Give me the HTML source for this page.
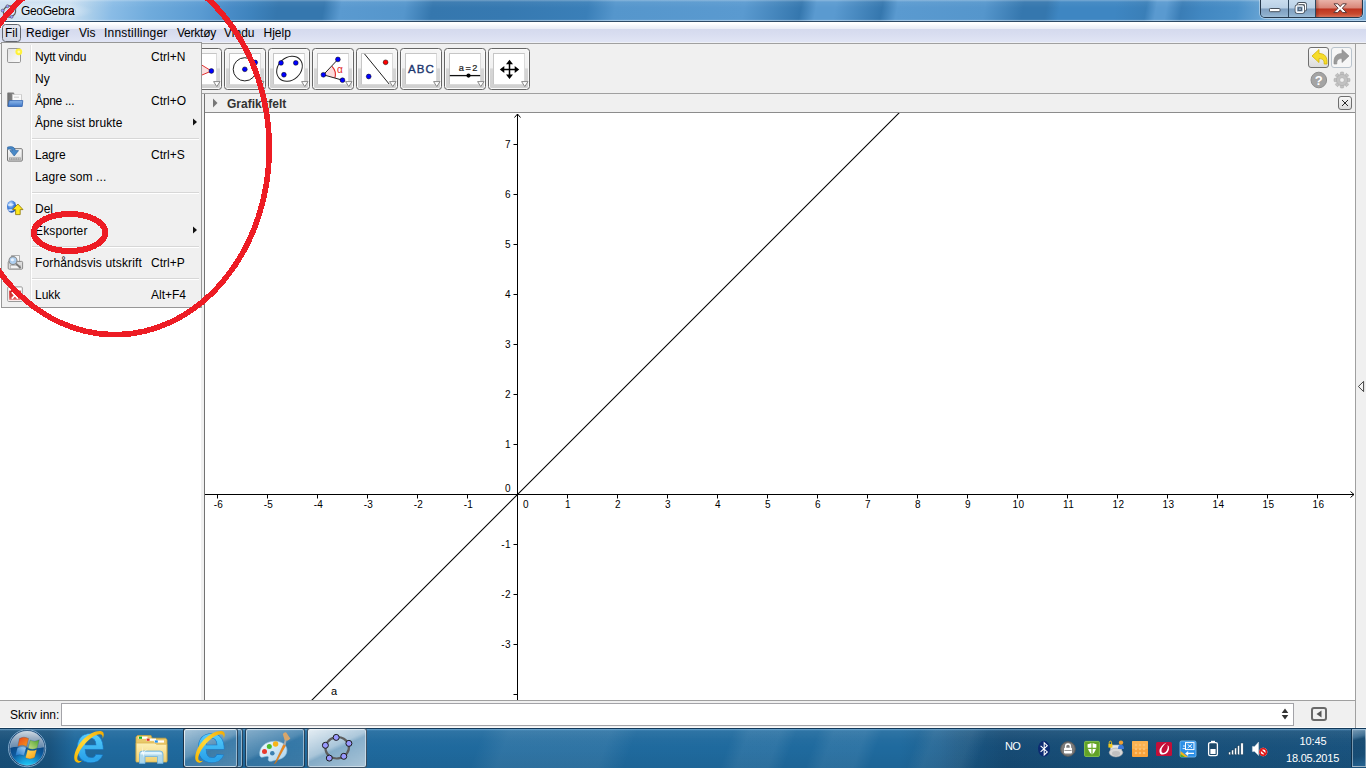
<!DOCTYPE html>
<html lang="no">
<head>
<meta charset="utf-8">
<title>GeoGebra</title>
<style>
html,body{margin:0;padding:0;}
body{width:1366px;height:768px;overflow:hidden;position:relative;background:#fff;font-family:"Liberation Sans",sans-serif;font-size:12px;color:#000;}
.abs,.abs-all *{position:absolute;}
svg{position:absolute;overflow:visible;}
#titlebar{left:0;top:0;width:1366px;height:22px;background:
 radial-gradient(ellipse 46px 9px at 48px 11px,rgba(255,255,255,.55),rgba(255,255,255,0) 100%),
 linear-gradient(180deg,rgba(255,255,255,.30) 0,rgba(255,255,255,.05) 2px,rgba(255,255,255,0) 8px,rgba(255,255,255,0) 19px,rgba(255,255,255,.10) 20px,rgba(255,255,255,.42) 20px,rgba(255,255,255,.42) 21px),
 linear-gradient(100deg,#cfe1f2 0,#cce0f1 70px,#a8cdea 92px,#8abce6 112px,#6fabdc 150px,#5a9bd2 200px,#4a8dc8 225px,#3e83bd 250px,#3577ae 275px,#3577ae 320px,#5a9ad0 337px,#5596cc 400px,#3577ae 427px,#3679b1 500px,#3a7fb8 580px,#5596cc 607px,#5a9ad0 734px,#3577ae 790px,#5a9ad0 805px,#5a9ad0 824px,#3577ae 870px,#5a9ad0 885px,#5596cc 971px,#3577ae 1009px,#3577ae 1032px,#3e86c2 1045px,#3e86c2 1100px,#3a7fb8 1130px,#5a9ad0 1140px,#5a9ad0 1150px,#3a7db6 1165px,#4187c1 1185px,#4a90c8 1220px,#74acd9 1257px,#7ab0dc 100%);}
#titlebar .txt{left:21px;top:4px;font-size:12px;line-height:14px;color:#000;white-space:nowrap;letter-spacing:-0.35px;}
#tbline{left:0;top:21px;width:1366px;height:1px;background:#2d4a66;}
#menubar{left:0;top:22px;width:1366px;height:21px;background:linear-gradient(180deg,#ffffff 0,#ffffff 2px,#f7f8fc 3px,#e9ecf6 7px,#d5daee 7px,#d8ddf0 12px,#e1e5f5 20px,#eef0f6 20px,#eef0f6 21px);}
#menuline{left:0;top:43px;width:1366px;height:1px;background:#a0a0a0;}
.mi{top:26px;font-size:12px;line-height:14px;white-space:nowrap;color:#000;}
#filbox{left:2px;top:24px;width:17px;height:16px;border:1px solid #62666e;border-radius:3.5px;background:linear-gradient(180deg,#e4e7f1,#d3d8e7);}
#toolbar{left:0;top:44px;width:1366px;height:49px;background:#f0f0f0;}
#toolline{left:0;top:93px;width:1366px;height:1px;background:#a0a0a0;}
.tbtn{top:48px;width:40px;height:40px;border:1px solid #666;border-radius:3.5px;background:linear-gradient(180deg,#f6f6f6 0,#f0f0f0 47%,#d6d6d6 50%,#d0d0d0 100%);box-shadow:inset 0 0 0 1px #fafafa;}
.tbtn .ic{left:4px;top:4px;width:30px;height:30px;background:#fff;border:1px solid #c6c6c6;border-right-color:#dadada;border-bottom-color:#dadada;}
.tbtn svg{left:0;top:0;}
/* panels */
#leftpanel{left:0;top:94px;width:201px;height:606px;background:#fff;border-right:3px solid #f0f0f0;}
#split1{left:204px;top:94px;width:1px;height:606px;background:#727272;}
#gbar{left:205px;top:94px;width:1150px;height:18px;background:#f0f0f0;}
#gbarline{left:205px;top:112px;width:1150px;height:1px;background:#8c8c8c;}
#gbar .t{left:22px;top:3px;font-weight:bold;font-size:12px;line-height:14px;color:#333;white-space:nowrap;}
#gclose{left:1338px;top:96px;width:12px;height:12px;border:1px solid #6e6e6e;border-radius:3px;background:linear-gradient(180deg,#f8f8f8,#dadada);}
#rside{left:1356px;top:44px;width:10px;height:684px;background:#f0f0f0;}
#rsideline{left:1355px;top:44px;width:1px;height:684px;background:#a0a0a0;}
/* input bar */
#inbar{left:0;top:700px;width:1355px;height:28px;background:#f0f0f0;border-top:1px solid #a0a0a0;box-sizing:border-box;}
#inbar .lbl{left:10px;top:7px;font-size:12px;line-height:14px;white-space:nowrap;}
#inbox{left:61px;top:703px;width:1231px;height:21px;border:1px solid #a3a3a8;background:#fff;}
#inbtn{left:1311px;top:707px;width:12px;height:10px;border:2px solid #696969;border-radius:3px;background:#f0f0f0;}
/* menu popup */
#popup{left:1px;top:42px;width:199px;height:264px;border:1px solid #979797;background:#f0f0f0;}
#popup .row{left:0;width:199px;height:22px;}
#popup .lab{left:33px;font-size:12px;line-height:14px;white-space:nowrap;}
#popup .sc{left:149px;font-size:12px;line-height:14px;white-space:nowrap;}
#popup .sep{left:30px;width:167px;height:1px;background:#d7d7d7;border-bottom:1px solid #fff;}
#popup .vsep{left:28px;top:2px;width:1px;height:260px;background:#e2e2e2;border-right:1px solid #fff;}
/* taskbar */
#taskbar{left:0;top:728px;width:1366px;height:40px;background:
 linear-gradient(180deg,#12395a 0,#12395a 1px,rgba(170,210,240,.65) 1px,rgba(130,185,225,.35) 2px,rgba(255,255,255,.07) 3px,rgba(255,255,255,.02) 12px,rgba(0,0,0,0) 20px,rgba(0,0,0,.05) 40px),
 linear-gradient(90deg,rgba(0,0,0,0) 940px,rgba(10,40,70,.18) 1000px,rgba(10,40,70,.18) 1366px),
 linear-gradient(110deg,rgba(255,255,255,0) 455px,rgba(255,255,255,.075) 480px,rgba(255,255,255,.075) 575px,rgba(255,255,255,0) 600px,rgba(255,255,255,0) 690px,rgba(255,255,255,.07) 705px,rgba(255,255,255,.07) 735px,rgba(255,255,255,0) 750px,rgba(255,255,255,0) 770px,rgba(255,255,255,.07) 785px,rgba(255,255,255,.07) 815px,rgba(255,255,255,0) 830px,rgba(255,255,255,0) 865px,rgba(255,255,255,.07) 880px,rgba(255,255,255,.07) 915px,rgba(255,255,255,0) 930px),
 linear-gradient(90deg,#18507a 0,#19537e 50px,#1f699d 75px,#1f6a9e 900px,#1b5b89 960px,#19537f 1010px,#1b5783 1100px,#1c5a87 1250px,#1d5c8a 1366px);}
.tkb{top:728px;height:40px;border-bottom:none;border:1px solid rgba(20,40,60,.75);border-radius:3px;box-sizing:border-box;box-shadow:inset 0 0 0 1px rgba(255,255,255,.45);}
.tray{color:#fff;font-size:11px;line-height:13px;white-space:nowrap;}
</style>
</head>
<body>
<!-- ===== window title bar ===== -->
<div id="titlebar" class="abs"><span class="abs txt">GeoGebra</span>
<svg width="22" height="22" viewBox="0 0 22 22" style="left:-.5px;top:.5px"><ellipse cx="9.5" cy="10.5" rx="6.2" ry="5.6" fill="none" stroke="#5a5a5a" stroke-width="1.2" transform="rotate(-15 9.5 10.5)"/><circle cx="7.5" cy="5.2" r="1.5" fill="#9a9aff" stroke="#444" stroke-width=".5"/><circle cx="2.6" cy="9.6" r="1.5" fill="#9a9aff" stroke="#444" stroke-width=".5"/><circle cx="4.4" cy="15.4" r="1.5" fill="#9a9aff" stroke="#444" stroke-width=".5"/><circle cx="11.6" cy="15.8" r="1.5" fill="#9a9aff" stroke="#444" stroke-width=".5"/><circle cx="14.6" cy="7.6" r="1.5" fill="#9a9aff" stroke="#444" stroke-width=".5"/></svg>
</div>
<!-- caption buttons -->
<div class="abs" id="capbtns" style="left:1260px;top:0;width:103px;height:18px;border:1px solid #25384c;border-top:none;border-radius:0 0 5px 5px;box-sizing:border-box;overflow:hidden;box-shadow:0 0 0 1px rgba(255,255,255,.40)">
 <div class="abs" style="left:0;top:0;width:27px;height:18px;background:linear-gradient(180deg,#c9dcee 0,#b9d0e6 44%,#7f9fc0 50%,#8cadcb 80%,#a4c2dc 100%);border-right:1px solid #2f4860"></div>
 <div class="abs" style="left:28px;top:0;width:26px;height:18px;background:linear-gradient(180deg,#c9dcee 0,#b9d0e6 44%,#7f9fc0 50%,#8cadcb 80%,#a4c2dc 100%);border-right:1px solid #2f4860"></div>
 <div class="abs" style="left:55px;top:0;width:48px;height:18px;background:linear-gradient(90deg,rgba(90,20,10,.35),rgba(90,20,10,0) 8%,rgba(90,20,10,0) 92%,rgba(90,20,10,.35)),linear-gradient(180deg,#e9b3a8 0,#d98678 44%,#bd3420 50%,#c84a30 78%,#da806a 100%)"></div>
 <svg width="103" height="18" viewBox="0 0 103 18" style="left:-1px;top:0">
  <rect x="9.5" y="8.5" width="10.5" height="3.2" rx=".8" fill="#fff" stroke="#46505c" stroke-width="1"/>
  <rect x="38.2" y="3.6" width="7.2" height="6.4" rx="1" fill="none" stroke="#46505c" stroke-width="3"/><rect x="38.2" y="3.6" width="7.2" height="6.4" rx="1" fill="none" stroke="#fff" stroke-width="1.4"/>
  <rect x="36.2" y="5.9" width="7.2" height="6.4" rx="1" fill="#a9c4dd" stroke="#46505c" stroke-width="3"/><rect x="36.2" y="5.9" width="7.2" height="6.4" rx="1" fill="#8fafd0" stroke="#fff" stroke-width="1.4"/><rect x="38.2" y="7.8" width="3.2" height="2.6" fill="#8fafd0" stroke="#46505c" stroke-width=".9"/>
  <path d="M74 3.8 L77.8 3.8 L80.2 6.6 L82.6 3.8 L86.4 3.8 L82.3 8.2 L86.6 12.6 L82.7 12.6 L80.2 9.8 L77.7 12.6 L73.8 12.6 L78.1 8.2 Z" fill="#fff" stroke="#5a3a3a" stroke-width="1" stroke-linejoin="round"/>
 </svg>
</div>
<div id="tbline" class="abs"></div>
<!-- ===== menu bar ===== -->
<div id="menubar" class="abs"></div>
<div id="menuline" class="abs"></div>
<div id="filbox" class="abs"></div>
<span class="abs mi" style="left:5px">Fil</span>
<span class="abs mi" style="left:26px;letter-spacing:.2px">Rediger</span>
<span class="abs mi" style="left:79px">Vis</span>
<span class="abs mi" style="left:104px;letter-spacing:.22px">Innstillinger</span>
<span class="abs mi" style="left:177px;letter-spacing:-.24px">Verktøy</span>
<span class="abs mi" style="left:224px">Vindu</span>
<span class="abs mi" style="left:263.5px">Hjelp</span>
<!-- ===== toolbar ===== -->
<div id="toolbar" class="abs"></div>
<div id="toolline" class="abs"></div>
<!-- toolbar buttons -->
<div class="abs tbtn" style="left:4px"><div class="abs ic"></div><svg width="42" height="42" viewBox="0 0 42 42" style="left:-1px;top:-1px"><path d="M14 11 L22 25 L17.5 24 L15 30 L13 29 L15.5 23 L11 22 Z" fill="#fff" stroke="#000" stroke-width="1"/><path d="M33.6 33.6 L40 33.6 L36.8 38.6 Z" fill="#fff" stroke="#8a8a8a" stroke-width="1"/></svg></div>
<div class="abs tbtn" style="left:48px"><div class="abs ic"></div><svg width="42" height="42" viewBox="0 0 42 42" style="left:-1px;top:-1px"><circle cx="20" cy="20" r="3" fill="#00f" stroke="#000" stroke-width=".5"/><text x="25" y="16" font-size="10" font-family="Liberation Sans,sans-serif" fill="#000">A</text><path d="M33.6 33.6 L40 33.6 L36.8 38.6 Z" fill="#fff" stroke="#8a8a8a" stroke-width="1"/></svg></div>
<div class="abs tbtn" style="left:92px"><div class="abs ic"></div><svg width="42" height="42" viewBox="0 0 42 42" style="left:-1px;top:-1px"><path d="M7 30 L33 10" stroke="#222" stroke-width="1"/><circle cx="13" cy="25.5" r="2.4" fill="#00f" stroke="#000" stroke-width=".5"/><circle cx="27" cy="14.5" r="2.4" fill="#00f" stroke="#000" stroke-width=".5"/><path d="M33.6 33.6 L40 33.6 L36.8 38.6 Z" fill="#fff" stroke="#8a8a8a" stroke-width="1"/></svg></div>
<div class="abs tbtn" style="left:136px"><div class="abs ic"></div><svg width="42" height="42" viewBox="0 0 42 42" style="left:-1px;top:-1px"><path d="M8 28 L32 28 M20 8 L20 32" stroke="#222" stroke-width="1"/><circle cx="20" cy="14" r="2.4" fill="#00f" stroke="#000" stroke-width=".5"/><path d="M33.6 33.6 L40 33.6 L36.8 38.6 Z" fill="#fff" stroke="#8a8a8a" stroke-width="1"/></svg></div>
<div class="abs tbtn" style="left:180px"><div class="abs ic"></div><svg width="42" height="42" viewBox="0 0 42 42" style="left:-1px;top:-1px"><path d="M31.4 23 L14 12.2 L6 18 L8 33 Z" fill="#fbe0e0" stroke="#e03030" stroke-width="1"/><circle cx="31.4" cy="23" r="2.4" fill="#00f" stroke="#000" stroke-width=".5"/><circle cx="14" cy="12.2" r="2.4" fill="#00f" stroke="#000" stroke-width=".5"/><circle cx="6" cy="18" r="2.4" fill="#00f" stroke="#000" stroke-width=".5"/><circle cx="8" cy="33" r="2.4" fill="#00f" stroke="#000" stroke-width=".5"/><path d="M33.6 33.6 L40 33.6 L36.8 38.6 Z" fill="#fff" stroke="#8a8a8a" stroke-width="1"/></svg></div>
<div class="abs tbtn" style="left:224px"><div class="abs ic"></div><svg width="42" height="42" viewBox="0 0 42 42" style="left:-1px;top:-1px"><circle cx="20.8" cy="21.3" r="11.6" fill="none" stroke="#222" stroke-width="1"/><circle cx="20.8" cy="21.3" r="2.4" fill="#00f" stroke="#000" stroke-width=".5"/><circle cx="31.2" cy="14.5" r="2.4" fill="#00f" stroke="#000" stroke-width=".5"/><path d="M33.6 33.6 L40 33.6 L36.8 38.6 Z" fill="#fff" stroke="#8a8a8a" stroke-width="1"/></svg></div>
<div class="abs tbtn" style="left:268px"><div class="abs ic"></div><svg width="42" height="42" viewBox="0 0 42 42" style="left:-1px;top:-1px"><ellipse cx="21.5" cy="20.7" rx="14" ry="11.2" transform="rotate(-42 21.5 20.7)" fill="none" stroke="#222" stroke-width="1"/><circle cx="13" cy="14.9" r="2.4" fill="#00f" stroke="#000" stroke-width=".5"/><circle cx="27.8" cy="14.9" r="2.4" fill="#00f" stroke="#000" stroke-width=".5"/><circle cx="15.9" cy="26.75" r="2.4" fill="#00f" stroke="#000" stroke-width=".5"/><path d="M33.6 33.6 L40 33.6 L36.8 38.6 Z" fill="#fff" stroke="#8a8a8a" stroke-width="1"/></svg></div>
<div class="abs tbtn" style="left:312px"><div class="abs ic"></div><svg width="42" height="42" viewBox="0 0 42 42" style="left:-1px;top:-1px"><path d="M11.4 26.8 L20 18.4 A12 12 0 0 1 22.9 30 Z" fill="#fbdcdc"/><path d="M20 18.4 A12 12 0 0 1 22.9 30" fill="none" stroke="#e02828" stroke-width="1.1"/><path d="M25.9 11.4 L11.4 26.8 L30.5 32.2" fill="none" stroke="#222" stroke-width="1"/><circle cx="11.4" cy="26.8" r="2.4" fill="#00f" stroke="#000" stroke-width=".5"/><circle cx="25.9" cy="11.4" r="2.4" fill="#00f" stroke="#000" stroke-width=".5"/><circle cx="30.5" cy="32.2" r="2.4" fill="#00f" stroke="#000" stroke-width=".5"/><text x="25" y="24.6" font-size="10" font-family="Liberation Sans,sans-serif" fill="#e02828">α</text><path d="M33.6 33.6 L40 33.6 L36.8 38.6 Z" fill="#fff" stroke="#8a8a8a" stroke-width="1"/></svg></div>
<div class="abs tbtn" style="left:356px"><div class="abs ic"></div><svg width="42" height="42" viewBox="0 0 42 42" style="left:-1px;top:-1px"><path d="M8.5 5.9 L33.1 36" stroke="#222" stroke-width="1"/><circle cx="12.7" cy="28.5" r="2.4" fill="#00f" stroke="#000" stroke-width=".5"/><circle cx="29.6" cy="14.3" r="2.4" fill="#f00" stroke="#000" stroke-width=".5"/><path d="M33.6 33.6 L40 33.6 L36.8 38.6 Z" fill="#fff" stroke="#8a8a8a" stroke-width="1"/></svg></div>
<div class="abs tbtn" style="left:400px"><div class="abs ic"></div><svg width="42" height="42" viewBox="0 0 42 42" style="left:-1px;top:-1px"><text x="8" y="24.7" font-size="11.5" font-family="Liberation Sans,sans-serif" fill="#1c366e" stroke="#1c366e" stroke-width=".35" letter-spacing="1.1">ABC</text><path d="M33.6 33.6 L40 33.6 L36.8 38.6 Z" fill="#fff" stroke="#8a8a8a" stroke-width="1"/></svg></div>
<div class="abs tbtn" style="left:444px"><div class="abs ic"></div><svg width="42" height="42" viewBox="0 0 42 42" style="left:-1px;top:-1px"><path d="M5.8 27.6 L36.2 27.6" stroke="#111" stroke-width="1.3"/><circle cx="24.5" cy="27.6" r="2.1" fill="#000"/><text x="14.7" y="22.9" font-size="9.2" font-family="Liberation Sans,sans-serif" fill="#1a1a1a" stroke="#1a1a1a" stroke-width=".2" letter-spacing="1.6">a=2</text><path d="M33.6 33.6 L40 33.6 L36.8 38.6 Z" fill="#fff" stroke="#8a8a8a" stroke-width="1"/></svg></div>
<div class="abs tbtn" style="left:488px"><div class="abs ic"></div><svg width="42" height="42" viewBox="0 0 42 42" style="left:-1px;top:-1px"><path d="M21.5 15 L21.5 28 M15 21.4 L28 21.4" stroke="#000" stroke-width="1.5"/><path d="M21.5 11.7 L25 16.2 L18 16.2 Z M21.5 31.1 L25 26.6 L18 26.6 Z M11.8 21.4 L16.3 17.9 L16.3 24.9 Z M31.2 21.4 L26.7 17.9 L26.7 24.9 Z" fill="#000"/><path d="M33.6 33.6 L40 33.6 L36.8 38.6 Z" fill="#fff" stroke="#8a8a8a" stroke-width="1"/></svg></div>
<!-- undo / redo / help / settings -->
<div class="abs" style="left:1308px;top:47px;width:19px;height:19px;border:1px solid #6f6f6f;border-radius:3px;background:linear-gradient(180deg,#fafafa,#dcdcdc)"></div>
<div class="abs" style="left:1331px;top:47px;width:19px;height:19px;border:1px solid #b9c3cc;border-radius:3px;background:#f6f6f6"></div>
<svg width="60" height="50" viewBox="0 0 60 50" style="left:1300px;top:43px">
 <path d="M12 13 L19 6.5 L19 10.5 C25 10.5 27.5 14 27 21 L24.2 21 C24.3 17.3 23 15.6 19 15.6 L19 19.5 Z" fill="#f6dc2a" stroke="#d4b400" stroke-width=".8" stroke-linejoin="round"/>
 <path d="M49 13 L42 6.5 L42 10.5 C36 10.5 33.5 14 34 21 L36.8 21 C36.7 17.3 38 15.6 42 15.6 L42 19.5 Z" fill="#9a9a9a" stroke="#8a8a8a" stroke-width=".6" stroke-linejoin="round"/>
 <circle cx="18.8" cy="37" r="7.8" fill="#a4a4a4"/><circle cx="18.8" cy="37" r="7.8" fill="none" stroke="#8f8f8f" stroke-width="1"/>
 <text x="18.8" y="41.6" text-anchor="middle" font-size="13" font-weight="bold" font-family="Liberation Sans,sans-serif" fill="#fff">?</text>
 <g transform="translate(42 37)" fill="#c2c2c2" stroke="#a6a6a6" stroke-width=".5">
  <g id="teeth"><rect x="-1.7" y="-8" width="3.4" height="16" rx=".8"/><rect x="-1.7" y="-8" width="3.4" height="16" rx=".8" transform="rotate(45)"/><rect x="-1.7" y="-8" width="3.4" height="16" rx=".8" transform="rotate(90)"/><rect x="-1.7" y="-8" width="3.4" height="16" rx=".8" transform="rotate(135)"/></g>
  <circle r="5.6"/><circle r="2.3" fill="#f0f0f0"/>
 </g>
</svg>
<!-- ===== panels ===== -->
<div id="leftpanel" class="abs"></div>
<div id="split1" class="abs"></div>
<div id="gbar" class="abs"><span class="abs t">Grafikkfelt</span>
 <svg width="8" height="10" viewBox="0 0 8 10" style="left:7px;top:4px"><path d="M1 .5 L5.5 5 L1 9.5 Z" fill="#777"/></svg>
</div>
<div id="gbarline" class="abs"></div>
<div id="gclose" class="abs"><svg width="12" height="12" viewBox="0 0 12 12" style="left:0;top:0"><path d="M3 3 L9 9 M9 3 L3 9" stroke="#111" stroke-width=".9"/></svg></div>
<div id="rside" class="abs"></div><div id="rsideline" class="abs"></div>
<svg width="10" height="13" viewBox="0 0 10 13" style="left:1356px;top:380px"><path d="M7.6 1.4 L2.4 6.5 L7.6 11.6 Z" fill="#f4f4f4" stroke="#303030" stroke-width=".9"/></svg>
<!-- ===== graphics view ===== -->
<svg id="graph" width="1150" height="587" viewBox="0 0 1150 587" style="left:205px;top:113px;overflow:hidden" font-family="Liberation Sans,sans-serif" font-size="10" letter-spacing=".4" fill="#000">
<path d="M0 381.5 L1149 381.5 M312.5 587 L312.5 1" stroke="#000" stroke-width="1" fill="none"/>
<path d="M309.5 4.5 L312.5 1 L315.5 4.5" stroke="#000" stroke-width="1" fill="none"/>
<path d="M1145.5 378.5 L1149 381.5 L1145.5 384.5" stroke="#000" stroke-width="1" fill="none"/>
<path d="M12.5 381.5 L12.5 385.5 M62.5 381.5 L62.5 385.5 M112.5 381.5 L112.5 385.5 M162.5 381.5 L162.5 385.5 M212.5 381.5 L212.5 385.5 M262.5 381.5 L262.5 385.5 M362.5 381.5 L362.5 385.5 M412.5 381.5 L412.5 385.5 M462.5 381.5 L462.5 385.5 M512.5 381.5 L512.5 385.5 M562.5 381.5 L562.5 385.5 M612.5 381.5 L612.5 385.5 M662.5 381.5 L662.5 385.5 M712.5 381.5 L712.5 385.5 M762.5 381.5 L762.5 385.5 M812.5 381.5 L812.5 385.5 M862.5 381.5 L862.5 385.5 M912.5 381.5 L912.5 385.5 M962.5 381.5 L962.5 385.5 M1012.5 381.5 L1012.5 385.5 M1062.5 381.5 L1062.5 385.5 M1112.5 381.5 L1112.5 385.5 M312.5 581.5 L308.5 581.5 M312.5 531.5 L308.5 531.5 M312.5 481.5 L308.5 481.5 M312.5 431.5 L308.5 431.5 M312.5 331.5 L308.5 331.5 M312.5 281.5 L308.5 281.5 M312.5 231.5 L308.5 231.5 M312.5 181.5 L308.5 181.5 M312.5 131.5 L308.5 131.5 M312.5 81.5 L308.5 81.5 M312.5 31.5 L308.5 31.5" stroke="#000" stroke-width="1" fill="none"/>
<text x="13.5" y="394.7" text-anchor="middle">-6</text>
<text x="63.5" y="394.7" text-anchor="middle">-5</text>
<text x="113.5" y="394.7" text-anchor="middle">-4</text>
<text x="163.5" y="394.7" text-anchor="middle">-3</text>
<text x="213.5" y="394.7" text-anchor="middle">-2</text>
<text x="263.5" y="394.7" text-anchor="middle">-1</text>
<text x="318.0" y="394.7">0</text>
<text x="363.1" y="394.7" text-anchor="middle">1</text>
<text x="413.1" y="394.7" text-anchor="middle">2</text>
<text x="463.1" y="394.7" text-anchor="middle">3</text>
<text x="513.1" y="394.7" text-anchor="middle">4</text>
<text x="563.1" y="394.7" text-anchor="middle">5</text>
<text x="613.1" y="394.7" text-anchor="middle">6</text>
<text x="663.1" y="394.7" text-anchor="middle">7</text>
<text x="713.1" y="394.7" text-anchor="middle">8</text>
<text x="763.1" y="394.7" text-anchor="middle">9</text>
<text x="813.5" y="394.7" text-anchor="middle">10</text>
<text x="863.5" y="394.7" text-anchor="middle">11</text>
<text x="913.5" y="394.7" text-anchor="middle">12</text>
<text x="963.5" y="394.7" text-anchor="middle">13</text>
<text x="1013.5" y="394.7" text-anchor="middle">14</text>
<text x="1063.5" y="394.7" text-anchor="middle">15</text>
<text x="1113.5" y="394.7" text-anchor="middle">16</text>
<text x="306.0" y="535.4" text-anchor="end">-3</text>
<text x="306.0" y="485.4" text-anchor="end">-2</text>
<text x="306.0" y="435.4" text-anchor="end">-1</text>
<text x="306.0" y="378.9" text-anchor="end">0</text>
<text x="306.0" y="335.4" text-anchor="end">1</text>
<text x="306.0" y="285.4" text-anchor="end">2</text>
<text x="306.0" y="235.4" text-anchor="end">3</text>
<text x="306.0" y="185.4" text-anchor="end">4</text>
<text x="306.0" y="135.4" text-anchor="end">5</text>
<text x="306.0" y="85.4" text-anchor="end">6</text>
<text x="306.0" y="35.4" text-anchor="end">7</text>
<path d="M102.5 591.5 L712.5 -18.5" stroke="#000" stroke-width="1.1" fill="none"/>
<text x="126" y="581.5" font-size="11">a</text>
</svg>
<!-- ===== input bar ===== -->
<div id="inbar" class="abs"><span class="abs lbl">Skriv inn:</span></div>
<div id="inbox" class="abs"></div>
<svg width="8" height="12" viewBox="0 0 8 12" style="left:1281px;top:708px"><path d="M4 .5 L7.3 5 L.7 5 Z M4 11.5 L7.3 7 L.7 7 Z" fill="#333"/></svg>
<div id="inbtn" class="abs"><svg width="12" height="10" viewBox="0 0 12 10" style="left:0;top:0"><path d="M8.5 1.5 L3.5 5 L8.5 8.5 Z" fill="#555"/></svg></div>
<div class="abs" style="left:0;top:727px;width:1355px;height:1px;background:#fbfbfb"></div><div class="abs" style="left:1356px;top:727px;width:10px;height:1px;background:#fbfbfb"></div>
<!-- ===== Fil menu popup ===== -->
<div id="popup" class="abs"><div class="abs vsep"></div>
<span class="abs lab" style="top:7px;letter-spacing:-0.21px">Nytt vindu</span>
<span class="abs sc" style="top:7px">Ctrl+N</span>
<svg width="17" height="17" viewBox="0 0 17 17" style="left:4px;top:5px"><defs><linearGradient id="gnew" x1="0" y1="0" x2="1" y2="1"><stop offset="0" stop-color="#e2e2e2"/><stop offset="1" stop-color="#fbfbfb"/></linearGradient></defs><rect x="1.5" y=".5" width="13" height="14" rx="1.2" fill="url(#gnew)" stroke="#8c8c8c" stroke-width=".9"/><circle cx="12.8" cy="3.8" r="3.4" fill="#fff23a"/><circle cx="12.8" cy="3.8" r="1.4" fill="#fffbb0"/></svg>
<span class="abs lab" style="top:29px">Ny</span>
<span class="abs lab" style="top:51px;letter-spacing:-0.27px">Åpne ...</span>
<span class="abs sc" style="top:51px">Ctrl+O</span>
<svg width="17" height="17" viewBox="0 0 17 17" style="left:4px;top:49px"><defs><linearGradient id="gop" x1="0" y1="0" x2="0" y2="1"><stop offset="0" stop-color="#8fb8ea"/><stop offset="1" stop-color="#3f78c8"/></linearGradient><linearGradient id="gopb" x1="0" y1="0" x2="1" y2="0"><stop offset="0" stop-color="#6e6e6e"/><stop offset="1" stop-color="#a8a8a8"/></linearGradient></defs><path d="M1.3 14.6 L1.3 1 Q1.3 .4 2 .4 L7.6 .4 L9 2.4 L15.2 2.4 Q15.8 2.4 15.8 3 L15.8 14.6 Z" fill="url(#gopb)"/><rect x="6.4" y="2.4" width="9" height="7.4" fill="#fafafa" stroke="#c8c8c8" stroke-width=".5"/><path d="M8 5.2 L13 5.2" stroke="#c0c0c0" stroke-width=".8"/><path d="M3.2 8.6 L16.8 8.6 L16.2 14.4 L2 14.4 Z" fill="url(#gop)" stroke="#2f62b0" stroke-width=".8" stroke-linejoin="round"/></svg>
<span class="abs lab" style="top:73px;letter-spacing:0.09px">Åpne sist brukte</span>
<svg width="6" height="8" viewBox="0 0 6 8" style="left:190px;top:75px"><path d="M1 .5 L5 4 L1 7.5 Z" fill="#111"/></svg>
<span class="abs lab" style="top:105px">Lagre</span>
<span class="abs sc" style="top:105px">Ctrl+S</span>
<svg width="17" height="17" viewBox="0 0 17 17" style="left:4px;top:103px"><defs><linearGradient id="gsv" x1="0" y1="0" x2="0" y2="1"><stop offset="0" stop-color="#fafafa"/><stop offset="1" stop-color="#dedede"/></linearGradient></defs><rect x="1.5" y="2.7" width="14.8" height="12.4" rx="1" fill="url(#gsv)" stroke="#747474" stroke-width="1"/><rect x="3" y="11.4" width="11.8" height="2.6" fill="#a2a2a2"/><path d="M4.5 12 L4.5 13.6 M6.8 12 L6.8 13.6 M9.1 12 L9.1 13.6 M11.4 12 L11.4 13.6 M13.4 12 L13.4 13.6" stroke="#d4d4d4" stroke-width=".7"/><path d="M1.6 1 Q8.6 -.6 9.4 4.6 L12.6 4.6 L8.2 10 L3.8 4.6 L6.6 4.6 Q6.2 2.4 1.6 3.2 Z" fill="#4a8ac8" stroke="#245a98" stroke-width=".6" stroke-linejoin="round"/></svg>
<span class="abs lab" style="top:127px;letter-spacing:0.1px">Lagre som ...</span>
<span class="abs lab" style="top:159px">Del</span>
<svg width="17" height="17" viewBox="0 0 17 17" style="left:4px;top:157px"><defs><radialGradient id="gsh" cx="40%" cy="30%" r="70%"><stop offset="0" stop-color="#cfe4ff"/><stop offset=".5" stop-color="#4a88e0"/><stop offset="1" stop-color="#1c4fb0"/></radialGradient></defs><ellipse cx="5.6" cy="6.6" rx="4.6" ry="6.2" fill="url(#gsh)"/><path d="M2 4.2 Q5 2.6 8 4.4 Q6 6.4 2.4 6 Z M2 9.4 Q5 8.4 8.6 9.6 Q6 11.6 2.6 11 Z" fill="#e4f0ff" fill-opacity=".8"/><path d="M11.9 4 L17 9.6 L14.2 9.6 L14.2 14.6 L9.6 14.6 L9.6 9.6 L6.6 9.6 Z" fill="#ffe81c" stroke="#8a7400" stroke-width=".8" stroke-linejoin="round"/></svg>
<span class="abs lab" style="top:181px;letter-spacing:0.13px">Eksporter</span>
<svg width="6" height="8" viewBox="0 0 6 8" style="left:190px;top:183px"><path d="M1 .5 L5 4 L1 7.5 Z" fill="#111"/></svg>
<span class="abs lab" style="top:213px;letter-spacing:0.15px">Forhåndsvis utskrift</span>
<span class="abs sc" style="top:213px">Ctrl+P</span>
<svg width="17" height="17" viewBox="0 0 17 17" style="left:4px;top:211px"><path d="M5.5 1.5 L13.5 1.5 L13.5 8 L5.5 8 Z" fill="#f6f6f6" stroke="#9a9a9a" stroke-width=".8"/><rect x="2.2" y="7.4" width="14.4" height="7.8" rx="1" fill="#dcdcdc" stroke="#808080" stroke-width=".9"/><rect x="4.6" y="11.4" width="9.6" height="3.2" fill="#f2f2f2" stroke="#a0a0a0" stroke-width=".5"/><circle cx="7" cy="6.6" r="4" fill="#a9cdf2" fill-opacity=".9" stroke="#8a8a8a" stroke-width="1.1"/><circle cx="6.4" cy="5.8" r="1.6" fill="#e8f3ff"/><path d="M10 9.6 L14.6 14" stroke="#7a7a7a" stroke-width="2"/></svg>
<span class="abs lab" style="top:245px">Lukk</span>
<span class="abs sc" style="top:245px">Alt+F4</span>
<svg width="17" height="17" viewBox="0 0 17 17" style="left:4px;top:243px"><defs><linearGradient id="gcl" x1="0" y1="0" x2="0" y2="1"><stop offset="0" stop-color="#cc2020"/><stop offset=".75" stop-color="#d84848"/><stop offset="1" stop-color="#eea0a0"/></linearGradient></defs><rect x="1.7" y=".9" width="14.6" height="14.6" rx="1" fill="#fff" stroke="#9a9a9a" stroke-width="1"/><rect x="3.2" y="4.6" width="11.6" height="9.6" fill="url(#gcl)"/><path d="M5.8 6.2 L12 12.6 M12 6.2 L5.8 12.6" stroke="#fff" stroke-width="1.7"/></svg>
<div class="abs sep" style="top:95px"></div>
<div class="abs sep" style="top:149px"></div>
<div class="abs sep" style="top:203px"></div>
<div class="abs sep" style="top:235px"></div>
</div>
<!-- ===== Windows taskbar ===== -->
<div id="taskbar" class="abs"></div>
<div class="abs tkb" style="left:183px;width:60px;background:linear-gradient(155deg,rgba(255,255,255,.40),rgba(255,255,255,.18) 45%,rgba(255,255,255,.08) 52%,rgba(255,255,255,.14))"></div>
<div class="abs tkb" style="left:183px;width:55px;background:linear-gradient(155deg,rgba(255,255,255,.30),rgba(255,255,255,.14) 45%,rgba(255,255,255,.05) 52%,rgba(255,255,255,.12))"></div>
<div class="abs tkb" style="left:245px;width:60px;background:linear-gradient(155deg,rgba(255,255,255,.42),rgba(255,255,255,.20) 45%,rgba(255,255,255,.09) 52%,rgba(255,255,255,.14))"></div>
<div class="abs tkb" style="left:307px;width:60px;background:linear-gradient(155deg,rgba(255,255,255,.88),rgba(255,255,255,.62) 45%,rgba(255,255,255,.46) 52%,rgba(255,255,255,.62))"></div>
<!-- start orb -->
<svg width="44" height="40" viewBox="0 0 44 40" style="left:5px;top:728px">
 <defs>
  <linearGradient id="orbt" x1="0" y1="0" x2="0" y2="1"><stop offset="0" stop-color="#dfe6ec"/><stop offset=".45" stop-color="#9fb2c6"/><stop offset="1" stop-color="#5f86ac"/></linearGradient>
  <radialGradient id="orbb" cx="50%" cy="100%" r="75%"><stop offset="0" stop-color="#22e0ff"/><stop offset=".3" stop-color="#1aa6e0"/><stop offset=".65" stop-color="#0c5a9e"/><stop offset="1" stop-color="#0a3f78"/></radialGradient>
  <linearGradient id="fr" x1="0" y1="0" x2="1" y2="1"><stop offset="0" stop-color="#e8421c"/><stop offset="1" stop-color="#f59a1e"/></linearGradient>
  <linearGradient id="fg" x1="0" y1="1" x2="1" y2="0"><stop offset="0" stop-color="#c8e08a"/><stop offset="1" stop-color="#4aa02c"/></linearGradient>
  <linearGradient id="fb" x1="0" y1="1" x2="1" y2="0"><stop offset="0" stop-color="#1270c8"/><stop offset="1" stop-color="#a8d4f4"/></linearGradient>
  <linearGradient id="fy" x1="0" y1="0" x2="1" y2="1"><stop offset="0" stop-color="#ffe060"/><stop offset="1" stop-color="#f89a10"/></linearGradient>
  <clipPath id="orbc"><circle cx="22.1" cy="20.2" r="17.2"/></clipPath>
 </defs>
 <circle cx="22.1" cy="20.2" r="18.6" fill="#0c3c6c" stroke="#8fb6d6" stroke-width=".9"/>
 <g clip-path="url(#orbc)">
  <rect x="3" y="1" width="40" height="40" fill="url(#orbb)"/>
  <path d="M3 1 L42 1 L42 18.5 Q32 21.5 22 19.6 Q12 17.6 3 20.5 Z" fill="url(#orbt)"/>
 </g>
 <circle cx="22.1" cy="20.2" r="17.2" fill="none" stroke="#c6d8e8" stroke-opacity=".55" stroke-width=".8"/>
 <g stroke="#0c3a6a" stroke-opacity=".45" stroke-width=".5">
 <path d="M14.4 10.6 Q18.5 7.8 23.7 10.4 L21.6 18.4 Q17.2 16 12.8 18.3 Z" fill="url(#fr)"/>
 <path d="M25.2 12 Q29.6 14.6 34.3 11.8 L32.2 20 Q27.8 22.6 23.2 20.2 Z" fill="url(#fg)"/>
 <path d="M12.4 19.8 Q16.8 17.4 21.2 19.6 L19 27.8 Q14.6 25.4 10.2 28 Z" fill="url(#fb)"/>
 <path d="M22.6 21.4 Q27 23.8 31.8 21.4 L29.6 29.6 Q25 32.2 20.4 29.8 Z" fill="url(#fy)"/>
 </g>
</svg>
<!-- taskbar icons -->
<svg width="366" height="40" viewBox="0 0 366 40" style="left:0;top:728px" font-family="Liberation Sans,sans-serif">
 <defs>
  <linearGradient id="ieb" x1="0" y1="0" x2="0" y2="1"><stop offset="0" stop-color="#8fe6ff"/><stop offset=".4" stop-color="#4cc4f8"/><stop offset=".75" stop-color="#2aa2ea"/><stop offset="1" stop-color="#3ab8f4"/></linearGradient>
  <linearGradient id="ier" x1="0" y1="1" x2="1" y2="0"><stop offset="0" stop-color="#f7b500"/><stop offset=".5" stop-color="#ffd83a"/><stop offset="1" stop-color="#f2a900"/></linearGradient>
  <linearGradient id="fold" x1="0" y1="0" x2="0" y2="1"><stop offset="0" stop-color="#fdf0b8"/><stop offset="1" stop-color="#f0d070"/></linearGradient>
  <linearGradient id="pal" x1="0" y1="0" x2="1" y2="1"><stop offset="0" stop-color="#f4fbff"/><stop offset="1" stop-color="#a9d2ec"/></linearGradient>
  <g id="ie">
   <text x="0" y="0" font-size="50" font-weight="bold" fill="url(#ieb)" transform="translate(1.6 32.8) scale(1.07 1.02)" stroke="#1878c8" stroke-width=".5">e</text>
   <path d="M3.5 33 C-2 31 1 19 9 10.5 C17 2 28 -1 29.8 3.2 C30.6 5 30 7.2 29 9.2 C29.6 6 28.4 4.2 25.6 4.6 C20 5.4 12 12 7 20 C3.2 26.4 2.6 31 5.6 31.4 C6.6 31.5 7.6 31.2 8.6 30.8 C6.8 32.6 5 33.5 3.5 33 Z" fill="url(#ier)"/>
  </g>
 </defs>
 <use href="#ie" x="0" y="0" transform="translate(73.6 1.6)"/>
 <use href="#ie" x="0" y="0" transform="translate(194.6 1.6)"/>
 <!-- explorer -->
 <g transform="translate(135 6)">
  <path d="M1 3 L1 27 L32 27 L32 5.6 L30.5 4.2 L17 4.2 L16 1.5 L2.5 1.5 Z" fill="#e9c86a" stroke="#caa23a" stroke-width=".8"/>
  <rect x="3.5" y="2.6" width="9" height="2.2" fill="#fff"/><rect x="4" y="2.6" width="3" height="2.2" fill="#13b41f"/>
  <rect x="11" y="4.6" width="10" height="2.2" fill="#fff"/><rect x="11.6" y="4.6" width="3" height="2.2" fill="#e02a20"/>
  <rect x="19" y="6.4" width="10" height="2.2" fill="#fff"/><rect x="19.8" y="6.4" width="3" height="2.2" fill="#1f8ff0"/>
  <path d="M1.2 9 L20 9 L21.5 10.2 L31.8 10.2 L31.8 28 L1.2 28 Z" fill="url(#fold)" stroke="#d9b552" stroke-width=".8"/>
  <path d="M4.5 29.5 L4.5 20 Q4.5 17 7.5 17 L25 17 Q28 17 28 20 L28 29.5 L22.5 29.5 L22.5 22.5 L10 22.5 L10 29.5 Z" fill="#a8d8f4" fill-opacity=".92" stroke="#6fb3e0" stroke-width=".8"/>
  <path d="M5.5 21 Q5.5 18 8.5 18 L24 18 Q27 18 27 20.5 L5.5 20.5Z" fill="#e6f6ff" fill-opacity=".9"/>
  <path d="M7 12 L8 18 L13.5 14.5 L8.6 18.6 L9 24 L7.6 19 L4 19.5 L7.3 18 Z" fill="#fff" fill-opacity=".95"/>
 </g>
 <!-- paint -->
 <g transform="translate(246 0)">
  <path d="M13.8 27.5 C12.5 20 19 12.8 29.5 13.2 C38 13.5 42.5 19 40.5 25 C39 29.5 34.5 31.5 30.5 32 C27 32.5 24 34.5 22.5 32.5 C21.5 31 23.5 29.5 22 28.5 C20 27.3 15 31.5 13.8 27.5 Z" fill="url(#pal)" stroke="#8fc0de" stroke-width=".6"/>
  <circle cx="26.3" cy="25.3" r="2.3" fill="#3d80b0"/>
  <circle cx="18.5" cy="23.4" r="2.5" fill="#e8392c"/><circle cx="23.3" cy="18.4" r="2.5" fill="#4cbb2f"/><circle cx="29.6" cy="16" r="2.7" fill="#f8b51a"/>
  <path d="M28.5 36 L37.6 16.5 L39.6 17.4 L30.4 34 Z" fill="#f08a1c" stroke="#c96a10" stroke-width=".5"/>
  <path d="M37.4 16.8 L38.8 11.5 L40.6 12.3 L39.5 17.6 Z" fill="#a9a9a9"/>
  <path d="M38.6 12 L36.8 6 Q38.8 3.6 40.2 4.6 L44.3 10.5 Q42.5 13 40.4 12.6 Z" fill="#d9a66a"/>
 </g>
 <!-- geogebra -->
 <g transform="translate(308 0)">
  <ellipse cx="29.2" cy="19.8" rx="11.8" ry="10.6" fill="none" stroke="#5e5e5e" stroke-width="2.2" transform="rotate(-12 29.2 19.8)"/>
  <g fill="#9999ff" stroke="#1a1a1a" stroke-width="1"><circle cx="28.2" cy="9.4" r="3"/><circle cx="40.9" cy="15.4" r="3"/><circle cx="35.8" cy="28.3" r="3"/><circle cx="21.3" cy="30.1" r="3"/><circle cx="17.4" cy="17.3" r="3"/></g>
 </g>
</svg>
<!-- system tray -->
<span class="abs tray" style="left:1005px;top:740px;letter-spacing:-.6px">NO</span>
<svg width="240" height="24" viewBox="0 0 240 24" style="left:1036px;top:738px" font-family="Liberation Sans,sans-serif">
 <ellipse cx="8" cy="10.75" rx="6" ry="7.9" fill="#0c2a72"/>
 <path d="M4.6 7.8 L11.3 13.9 L8.2 16.9 L8.2 4.7 L11.3 7.7 L4.6 13.8" fill="none" stroke="#fff" stroke-width="1.05" stroke-linejoin="miter" stroke-linecap="butt"/>
 <circle cx="32" cy="11" r="7.3" fill="#7c7c7c" stroke="#5a5a5a" stroke-width="1"/>
 <rect x="28" y="9.8" width="8" height="5.6" rx=".8" fill="#fff"/><path d="M29.6 10 L29.6 8.2 Q29.6 6 32 6 Q34.4 6 34.4 8.2 L34.4 10" fill="none" stroke="#fff" stroke-width="1.4"/><rect x="28.4" y="12" width="7.2" height="1" fill="#9a9a9a"/>
 <rect x="48.6" y="3.4" width="14.8" height="15" rx="1" fill="#62a226" stroke="#8ccc4c" stroke-width=".9"/>
 <path d="M51.5 6.2 Q56 5 56 5 Q56 5 60.5 6.2 Q60.8 13 56 16.6 Q51.2 13 51.5 6.2 Z" fill="#fff"/><path d="M56 5 L56 16.6 M51.4 10.4 L60.6 10.4" stroke="#6fae2e" stroke-width="1.2"/>
 <g><rect x="74.5" y="7" width="11" height="7" fill="#dfe6ee" stroke="#9aa7b5" stroke-width=".6"/><ellipse cx="80" cy="14.5" rx="6.8" ry="4.4" fill="#d8d8d8" stroke="#a8a8a8" stroke-width=".6"/><ellipse cx="80" cy="15.5" rx="4" ry="2.4" fill="#c0c0c0"/>
  <circle cx="85" cy="4.6" r="2.2" fill="#f0a030"/><path d="M82 11 Q82 6.8 85 6.8 Q88 6.8 88 11 Z" fill="#3b78d8"/>
  <rect x="72.4" y="6" width="4" height="3.6" fill="#f2c81e"/><path d="M73.2 6 L73.2 4.6 Q73.2 3.2 74.4 3.2 Q75.6 3.2 75.6 4.6 L75.6 6" fill="none" stroke="#f2c81e" stroke-width=".9"/></g>
 <rect x="96" y="3" width="16" height="16" rx="1" fill="#f9a23a"/><rect x="96" y="3" width="16" height="8" rx="1" fill="#fcb858" fill-opacity=".8"/>
 <g fill="#fcc070"><circle cx="100" cy="7" r="1.3"/><circle cx="104" cy="7" r="1.3"/><circle cx="108" cy="7" r="1.3"/><circle cx="100" cy="11" r="1.3"/><circle cx="104" cy="11" r="1.3"/><circle cx="108" cy="11" r="1.3"/><circle cx="100" cy="15" r="1.3"/><circle cx="104" cy="15" r="1.3"/><circle cx="108" cy="15" r="1.3"/></g>
 <rect x="120" y="4" width="16" height="14" rx="1.5" fill="#c40f38"/>
 <path d="M130.5 4.6 Q124 8 123.4 13 Q123.4 16.8 127 16.6 Q132 16 133 11 Q133.4 8 131.6 7 Q132.4 11 129.6 14 Q127 16 125.6 14 Q124.6 10 130.5 4.6 Z" fill="#fff"/>
 <rect x="144" y="3" width="16" height="16" rx="1.5" fill="#2c8fe6" stroke="#7fc4f8" stroke-width=".8"/><path d="M144.5 13 L152 19 L144.5 19 Z" fill="#f5b21a"/><path d="M144.5 16 L149 19 L144.5 19Z" fill="#4caf2a"/>
 <rect x="149.5" y="4.6" width="8.5" height="7" fill="none" stroke="#fff" stroke-width="1"/><path d="M151.6 6.4 L156 10 M156 6.4 L151.6 10" stroke="#fff" stroke-width=".9"/><path d="M147 8 L149.5 8 M146.6 10.6 L149.5 10.6" stroke="#fff" stroke-width=".9"/><path d="M150 15.4 L158 15.4 M152.2 13.6 L150 15.4 L152.2 17.2" stroke="#fff" stroke-width="1.1" fill="none"/>
 <rect x="172.6" y="4.6" width="8.8" height="13" rx="1.6" fill="#1f4a6a" stroke="#fff" stroke-width="1.3"/><rect x="175" y="2.8" width="4" height="2" fill="#fff"/><rect x="174.4" y="11" width="5.2" height="5" fill="#fff"/>
 <g fill="#fff" stroke="#173a55" stroke-width=".5"><rect x="192.6" y="14" width="2" height="2.8"/><rect x="195.6" y="12" width="2" height="4.8"/><rect x="198.6" y="10" width="2" height="6.8"/><rect x="201.6" y="7.6" width="2" height="9.2"/><rect x="204.8" y="5" width="2.4" height="11.8"/></g>
 <path d="M216.4 8.4 L218.6 8.4 L222.6 4 L222.6 17.6 L218.6 13.6 L216.4 13.6 Z" fill="#fff" stroke="#d0d8e0" stroke-width=".5"/>
 <circle cx="227.2" cy="14" r="4.2" fill="#fff"/><circle cx="227.2" cy="14" r="3.3" fill="none" stroke="#e01818" stroke-width="1.7"/><path d="M224.8 11.8 L229.6 16.2" stroke="#e01818" stroke-width="1.6"/>
</svg>
<span class="abs tray" style="left:1299.5px;top:735px;letter-spacing:-.1px">10:45</span>
<span class="abs tray" style="left:1286px;top:752px;letter-spacing:-.2px">18.05.2015</span>
<div class="abs" style="left:1352px;top:729px;width:14px;height:38px;border:1px solid rgba(255,255,255,.42);box-shadow:-1px 0 0 #0e2f4a;background:linear-gradient(165deg,rgba(255,255,255,.34) 0,rgba(255,255,255,.14) 20%,rgba(0,0,0,.10) 28%,rgba(0,0,0,.06) 70%,rgba(70,150,210,.28) 100%);box-sizing:border-box"></div>
<!-- ===== red annotation marks ===== -->
<svg width="1366" height="768" viewBox="0 0 1366 768" style="left:0;top:0;pointer-events:none" shape-rendering="crispEdges">
 <ellipse cx="115" cy="148" rx="154.3" ry="186.7" fill="none" stroke="#ed1c24" stroke-width="5.6"/>
 <ellipse cx="69.55" cy="232.5" rx="35.7" ry="18.5" fill="none" stroke="#ed1c24" stroke-width="6"/>
</svg>
</body>
</html>
